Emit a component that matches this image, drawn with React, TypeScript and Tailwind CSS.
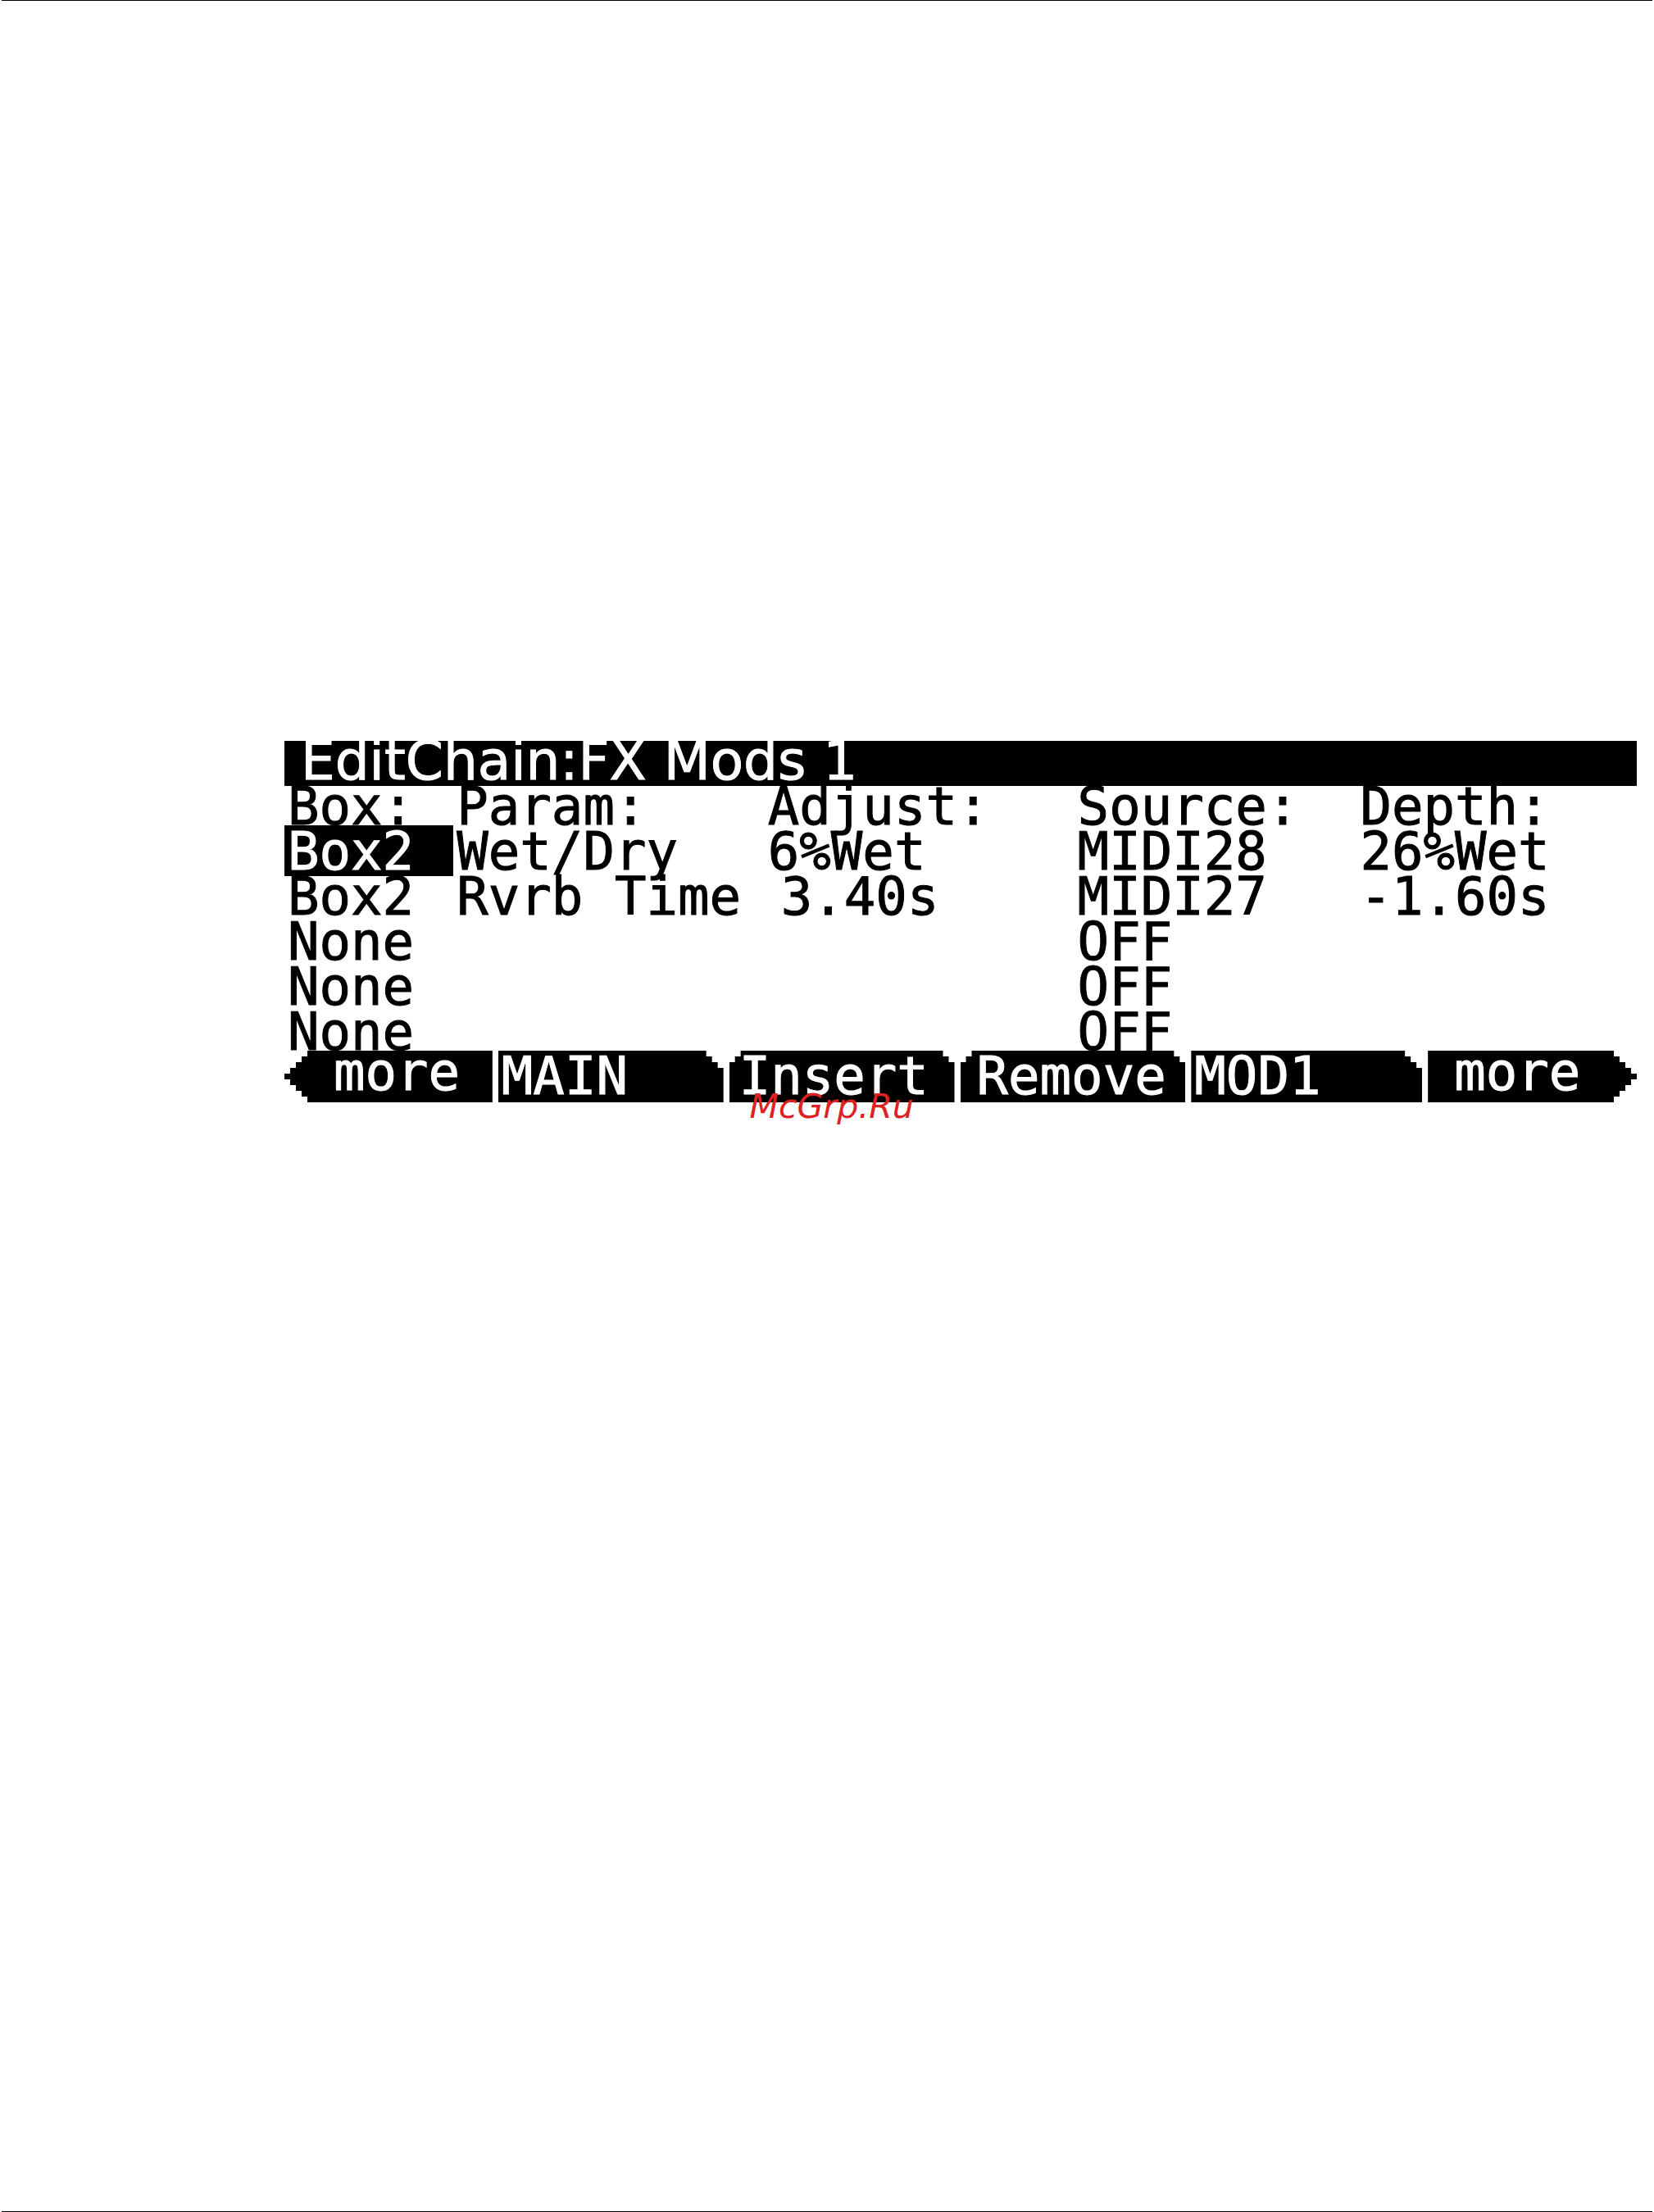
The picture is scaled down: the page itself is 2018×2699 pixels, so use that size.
import clsx from 'clsx';

interface ModRow {
  box: string;
  param: string;
  adjust: string;
  source: string;
  depth: string;
  indent?: boolean;
}

const columns = ['Box:', 'Param:', 'Adjust:', 'Source:', 'Depth:'];

const rows: ModRow[] = [
  { box: 'Box2', param: 'Wet/Dry', adjust: '6%Wet', source: 'MIDI28', depth: '26%Wet' },
  { box: 'Box2', param: 'Rvrb Time', adjust: '3.40s', source: 'MIDI27', depth: '-1.60s', indent: true },
  { box: 'None', param: '', adjust: '', source: 'OFF', depth: '' },
  { box: 'None', param: '', adjust: '', source: 'OFF', depth: '' },
  { box: 'None', param: '', adjust: '', source: 'OFF', depth: '' },
];

// stepped outlines of the soft keys, one step is one LCD dot (7px)
const arrowLeft =
  '[clip-path:polygon(28px_0,100%_0,100%_100%,28px_100%,28px_56px,21px_56px,21px_49px,14px_49px,14px_42px,7px_42px,7px_35px,0_35px,0_28px,7px_28px,7px_21px,14px_21px,14px_14px,21px_14px,21px_7px,28px_7px)]';
const arrowRight =
  '[clip-path:polygon(0_0,calc(100%-28px)_0,calc(100%-28px)_7px,calc(100%-21px)_7px,calc(100%-21px)_14px,calc(100%-14px)_14px,calc(100%-14px)_21px,calc(100%-7px)_21px,calc(100%-7px)_28px,100%_28px,100%_35px,calc(100%-7px)_35px,calc(100%-7px)_42px,calc(100%-14px)_42px,calc(100%-14px)_49px,calc(100%-21px)_49px,calc(100%-21px)_56px,calc(100%-28px)_56px,calc(100%-28px)_100%,0_100%)]';
const page =
  '[clip-path:polygon(0_0,calc(100%-21px)_0,calc(100%-21px)_7px,calc(100%-14px)_7px,calc(100%-14px)_14px,calc(100%-7px)_14px,calc(100%-7px)_21px,100%_21px,100%_100%,0_100%)]';
const action =
  '[clip-path:polygon(14px_0,calc(100%-14px)_0,calc(100%-14px)_7px,calc(100%-7px)_7px,calc(100%-7px)_14px,100%_14px,100%_100%,0_100%,0_14px,7px_14px,7px_7px,14px_7px)]';

const softKeys = [
  { label: 'more', className: clsx(arrowLeft, 'pt-px pl-15') },
  { label: 'MAIN', className: clsx(page, 'pt-1.5 pl-1') },
  { label: 'Insert', className: clsx(action, 'pt-1.5 pl-3') },
  { label: 'Remove', className: clsx(action, 'pt-1.5 pl-5') },
  { label: 'MOD1', className: clsx(page, 'pt-1.5 pl-1') },
  { label: 'more', className: clsx(arrowRight, 'pt-px pl-8') },
];

const ModsTable = () => (
  <table className="w-full table-fixed border-collapse text-left whitespace-nowrap">
    <colgroup>
      <col className="w-[12.5%]" />
      <col className="w-[23%]" />
      <col className="w-[22.9%]" />
      <col className="w-[20.9%]" />
      <col />
    </colgroup>
    <thead>
      <tr>
        {columns.map((column) => (
          <th key={column} className="p-0 pb-[5px] pl-1 font-normal">
            {column}
          </th>
        ))}
      </tr>
    </thead>
    <tbody>
      {rows.map((row, i) => (
        <tr key={i}>
          <td className={clsx('p-0 pb-[5px] pl-1', i === 0 && 'bg-black text-white shadow-[0_-7px_0_#000]')}>
            {row.box}
          </td>
          <td className="p-0 pb-[5px] pl-1">{row.param}</td>
          <td className={clsx('p-0 pb-[5px]', row.indent ? 'pl-5' : 'pl-1')}>{row.adjust}</td>
          <td className="p-0 pb-[5px] pl-1">{row.source}</td>
          <td className="p-0 pb-[5px] pl-1">{row.depth}</td>
        </tr>
      ))}
    </tbody>
  </table>
);

export default function App() {
  return (
    <div className="min-h-screen bg-white px-0.5">
      <main className="min-h-screen border-y border-black pt-[903px] pr-[19px] pl-[345px]">
        <section className="relative font-['DejaVu_Sans_Mono',monospace] text-[64px] leading-[50px] text-black">
          <div className="[-webkit-text-stroke:1px]">
            <h1 className="bg-black pb-[5px] pl-5 font-['DejaVu_Sans',sans-serif] text-[66px] leading-[50px] whitespace-nowrap text-white">
              EditChain:FX Mods 1
            </h1>
            <ModsTable />
            <nav className="relative -mt-[7px] grid grid-cols-[254fr_275fr_275fr_275fr_282fr_255fr] gap-[7px]">
              {softKeys.map((key, i) => (
                <button
                  key={i}
                  type="button"
                  className={clsx('flex h-[63px] min-w-0 items-start bg-black whitespace-nowrap text-white', key.className)}
                >
                  {key.label}
                </button>
              ))}
            </nav>
          </div>
          <span className="absolute -bottom-[25px] left-[34.4%] font-['DejaVu_Sans',sans-serif] text-[41px] leading-[40px] text-[#dd2222] italic">
            McGrp.Ru
          </span>
        </section>
      </main>
    </div>
  );
}
